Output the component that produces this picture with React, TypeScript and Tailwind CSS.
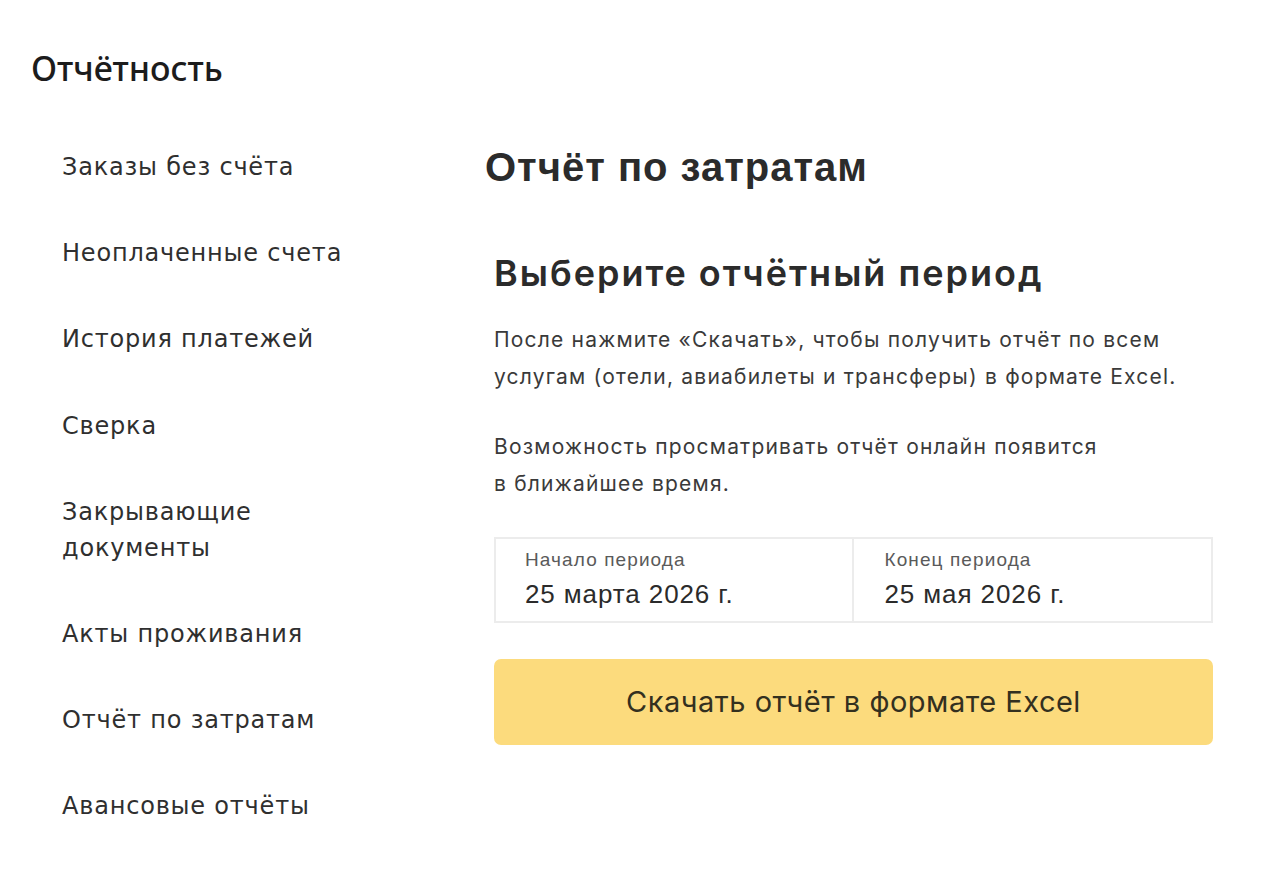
import React from "react";

const items = [
  "Заказы без счёта",
  "Неоплаченные счета",
  "История платежей",
  "Сверка",
  "Закрывающие документы",
  "Акты проживания",
  "Отчёт по затратам",
  "Авансовые отчёты",
];

export default function App() {
  return (
    <div className="w-[1280px] h-[891px] bg-white overflow-hidden flex">
      <aside className="w-[470px] shrink-0 flex flex-col">
        <div className="pl-[31px] pt-[46px] text-[34px] leading-[44px] font-medium text-[#1c1c1c] font-['Noto_Sans',sans-serif]">
          Отчётность
        </div>
        <nav className="mt-[34px] flex flex-col pl-[62px]">
          {items.map((t) => (
            <div
              key={t}
              className="py-[25.1px] text-[24px] leading-[36px] tracking-[0.8px] text-[#2f2f2f] font-['DejaVu_Sans',sans-serif] max-w-[300px]"
            >
              {t}
            </div>
          ))}
        </nav>
      </aside>
      <main className="flex-1 pt-[143px] pl-[15px] pr-[67px] font-['Inter',sans-serif]">
        <h1 className="text-[40px] leading-[48px] tracking-[1px] font-bold text-[#2b2b2b] font-['Liberation_Sans',sans-serif]">
          Отчёт по затратам
        </h1>
        <div className="pl-[9px] pt-[58px]">
          <h2 className="text-[36px] leading-[48px] tracking-[2px] font-semibold text-[#2b2b2b]">
            Выберите отчётный период
          </h2>
          <p className="mt-[24px] text-[21px] leading-[37px] tracking-[1.2px] text-[#3a3a3a]">
            После нажмите «Скачать», чтобы получить отчёт по всем
            <br />
            услугам (отели, авиабилеты и трансферы) в формате Excel.
          </p>
          <p className="mt-[33px] text-[21px] leading-[37px] tracking-[1.2px] text-[#3a3a3a]">
            Возможность просматривать отчёт онлайн появится
            <br />в ближайшее время.
          </p>
          <div className="mt-[35px] grid grid-cols-2 border-2 border-[#ececec] h-[86px] font-['Liberation_Sans',sans-serif]">
            <div className="pl-[29px] pt-[8px] border-r-2 border-[#ececec]">
              <div className="text-[19px] leading-[26px] tracking-[1.1px] text-[#5a5a5a]">Начало периода</div>
              <div className="mt-[3px] text-[26px] leading-[36px] tracking-[0.9px] text-[#2b2b2b]">25 марта 2026 г.</div>
            </div>
            <div className="pl-[31px] pt-[8px]">
              <div className="text-[19px] leading-[26px] tracking-[1.1px] text-[#5a5a5a]">Конец периода</div>
              <div className="mt-[3px] text-[26px] leading-[36px] tracking-[0.9px] text-[#2b2b2b]">25 мая 2026 г.</div>
            </div>
          </div>
          <button className="mt-[36px] w-full h-[86px] rounded-[7px] bg-[#fcdb7d] text-[29px] tracking-[0.5px] text-[#33301f] flex items-center justify-center">
            Скачать отчёт в формате Excel
          </button>
        </div>
      </main>
    </div>
  );
}
